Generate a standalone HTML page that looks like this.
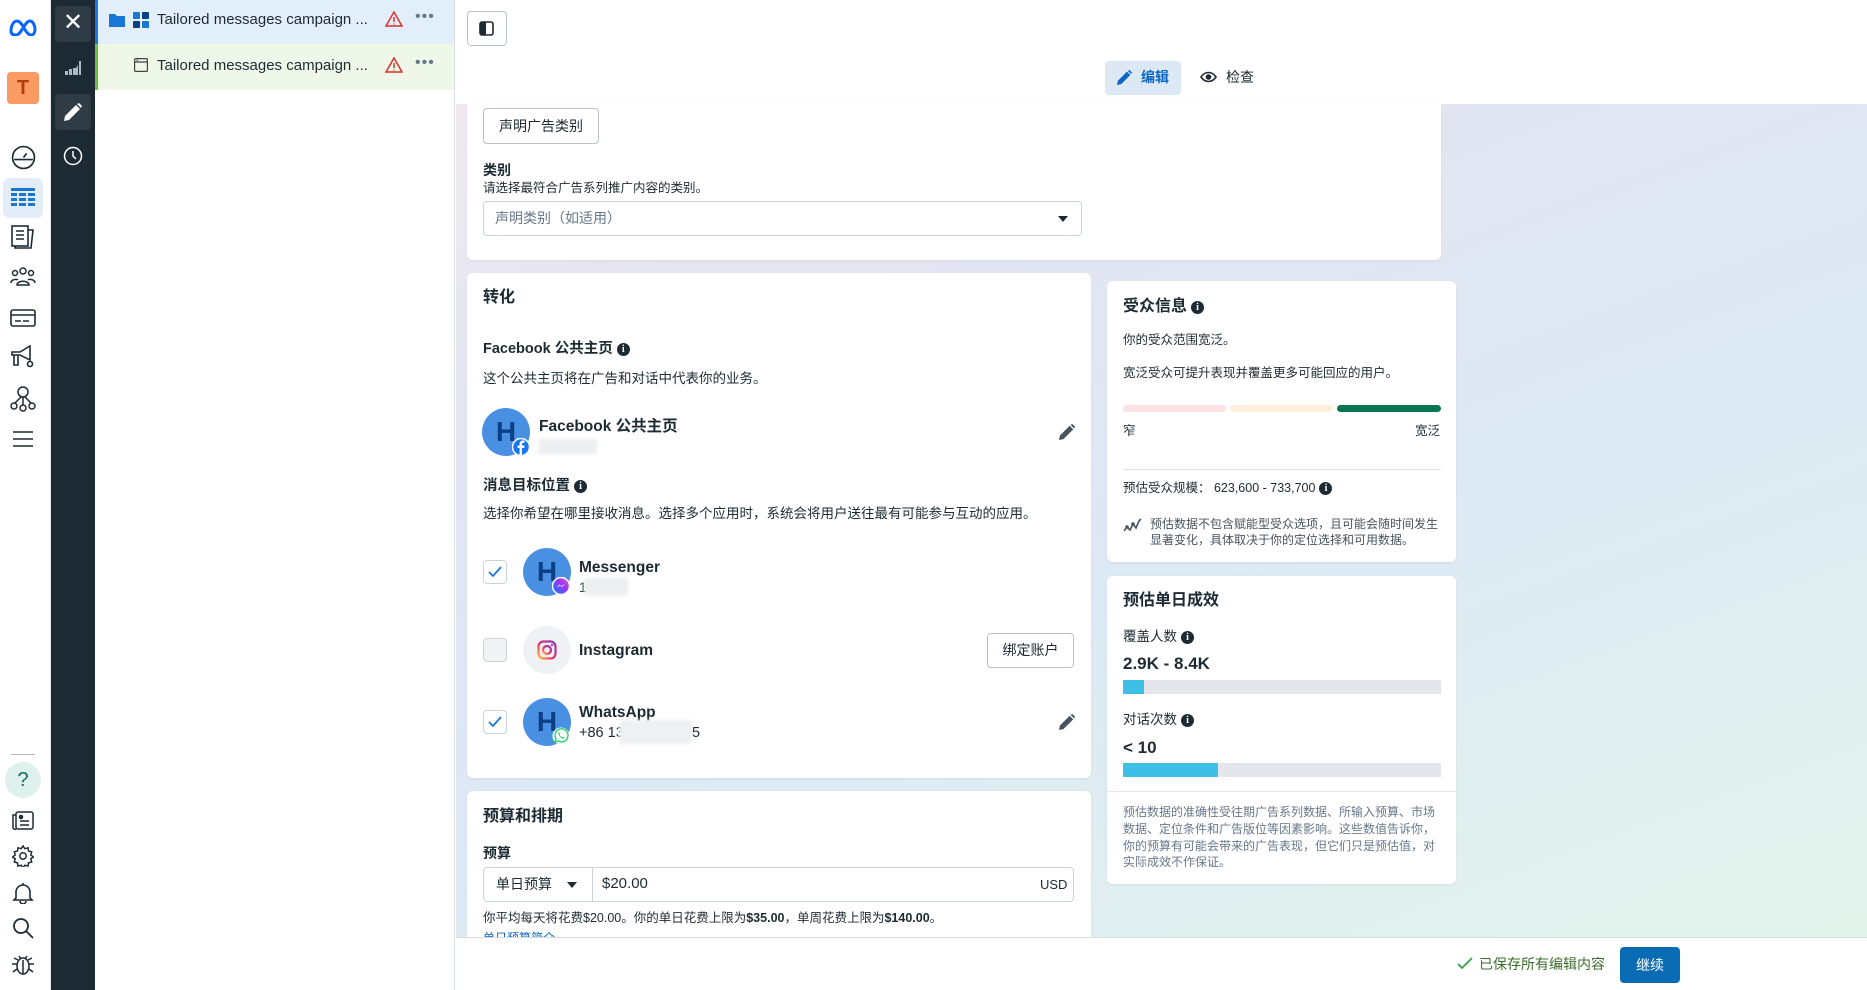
<!DOCTYPE html>
<html><head><meta charset="utf-8"><style>
*{box-sizing:border-box;margin:0;padding:0}
body{width:1867px;height:990px;overflow:hidden;position:relative;font-family:"Liberation Sans","Noto Sans CJK SC",sans-serif;color:#1c2b33;background:#fff}
.a{position:absolute}
.t{position:absolute;white-space:nowrap;line-height:1}
.card{position:absolute;background:#fff;border-radius:6px;box-shadow:0 1px 3px rgba(0,0,0,.06)}
.h{font-size:16px;font-weight:bold}
.s{font-size:13.5px;color:#1c2b33}
.info{display:inline-block;width:13px;height:13px;border-radius:50%;background:#1c2b33;color:#fff;font-size:10px;font-weight:bold;text-align:center;line-height:13px;vertical-align:1px;margin-left:4px;font-family:"Liberation Serif",serif}
.av{position:absolute;width:48px;height:48px;border-radius:50%;background:#4a90e2;color:#0a3f86;font-weight:bold;font-size:28px;text-align:center;line-height:48px}
.cb{position:absolute;width:24px;height:24px;border:1px solid #cbd2d9;border-radius:4px;background:#fff}
.ic{position:absolute}
</style></head><body>
<!-- left rail -->
<div class="a" style="left:0;top:0;width:51px;height:990px;background:#fff;border-right:1px solid #e6e9ec"></div>
<svg class="ic" style="left:8px;top:18px" width="30" height="18" viewBox="0 0 30 18"><path d="M3 13c0-6 3-10 6-10s6 5 7 7 4 7 7 7 4-3 4-6-2-8-5-8-5 4-7 7-4 7-7 7-5-1-5-4z" fill="none" stroke="#0866ff" stroke-width="3"/></svg>
<div class="a" style="left:7px;top:72px;width:32px;height:32px;background:#f99b62;border-radius:4px;color:#b53d0c;font-weight:bold;font-size:20px;text-align:center;line-height:32px">T</div>
<svg class="ic" style="left:11px;top:145px" width="25" height="25" viewBox="0 0 24 24" fill="none" stroke="#1c2b33" stroke-width="1.6"><circle cx="12" cy="12" r="10.5"/><path d="M3 14h18M12 12l3-4"/></svg>
<div class="a" style="left:3px;top:178px;width:40px;height:40px;background:#e3edf7;border-radius:6px"></div>
<svg class="ic" style="left:11px;top:188px" width="24" height="20" viewBox="0 0 24 20" fill="#1877d4"><rect x="0" y="0" width="24" height="3"/><rect x="0" y="5" width="6" height="3"/><rect x="8" y="5" width="7" height="3"/><rect x="17" y="5" width="7" height="3"/><rect x="0" y="10" width="6" height="3"/><rect x="8" y="10" width="7" height="3"/><rect x="17" y="10" width="7" height="3"/><rect x="0" y="15" width="6" height="3"/><rect x="8" y="15" width="7" height="3"/><rect x="17" y="15" width="7" height="3"/></svg>
<svg class="ic" style="left:11px;top:225px" width="24" height="24" viewBox="0 0 24 24" fill="none" stroke="#1c2b33" stroke-width="1.6"><rect x="1" y="1" width="16" height="20"/><path d="M17 5h5l-2 18H4v-2M5 6h8M5 10h8M5 14h8"/></svg>
<svg class="ic" style="left:10px;top:267px" width="26" height="20" viewBox="0 0 26 20" fill="none" stroke="#1c2b33" stroke-width="1.5"><circle cx="13" cy="4" r="3"/><circle cx="5" cy="6" r="2.5"/><circle cx="21" cy="6" r="2.5"/><path d="M7 18c0-5 12-5 12 0zM1 16c0-4 6-4 7-3M25 16c0-4-6-4-7-3"/></svg>
<svg class="ic" style="left:10px;top:309px" width="26" height="18" viewBox="0 0 26 18" fill="none" stroke="#1c2b33" stroke-width="1.6"><rect x="1" y="1" width="24" height="16" rx="2"/><path d="M1 6h24M5 12h6M13 12h6"/></svg>
<svg class="ic" style="left:10px;top:345px" width="26" height="24" viewBox="0 0 26 24" fill="none" stroke="#1c2b33" stroke-width="1.6"><path d="M2 7h8l10-6v14L10 10H2zM4 10v10h4V10"/><circle cx="20" cy="19" r="2.5"/></svg>
<svg class="ic" style="left:10px;top:386px" width="26" height="26" viewBox="0 0 26 26" fill="none" stroke="#1c2b33" stroke-width="1.5"><circle cx="13" cy="6" r="5"/><circle cx="4" cy="20" r="3"/><circle cx="13" cy="22" r="3"/><circle cx="22" cy="20" r="3"/><path d="M11 11l-6 6M13 11v8M15 11l6 6"/></svg>
<svg class="ic" style="left:13px;top:431px" width="20" height="16" viewBox="0 0 20 16" stroke="#1c2b33" stroke-width="1.6"><path d="M0 1h20M0 8h20M0 15h20"/></svg>
<div class="a" style="left:11px;top:754px;width:24px;height:1px;background:#aeb8c2"></div>
<div class="a" style="left:5px;top:762px;width:36px;height:36px;border-radius:50%;background:#dff1ec;color:#1a6b5c;font-size:20px;text-align:center;line-height:36px">?</div>
<svg class="ic" style="left:12px;top:811px" width="22" height="19" viewBox="0 0 22 19" fill="none" stroke="#1c2b33" stroke-width="1.5"><rect x="4" y="1" width="17" height="17" rx="2"/><path d="M4 4H1v12a2 2 0 0 0 3 2M8 10h9M8 14h9"/><circle cx="9" cy="6" r="1.5" fill="#1c2b33"/></svg>
<svg class="ic" style="left:12px;top:845px" width="22" height="22" viewBox="0 0 24 24" fill="none" stroke="#1c2b33" stroke-width="1.6"><circle cx="12" cy="12" r="3.5"/><path d="M12 1l2 3 3.5-1 .5 3.5 3.5 1-1 3.5 3 2-3 2 1 3.5-3.5 1-.5 3.5-3.5-1-2 3-2-3-3.5 1-.5-3.5-3.5-1 1-3.5-3-2 3-2-1-3.5 3.5-1 .5-3.5 3.5 1z"/></svg>
<svg class="ic" style="left:12px;top:882px" width="22" height="22" viewBox="0 0 22 22" fill="none" stroke="#1c2b33" stroke-width="1.6"><path d="M11 1v2M4 16V10a7 7 0 0 1 14 0v6l2 2H2zM8 19a3 3 0 0 0 6 0"/></svg>
<svg class="ic" style="left:12px;top:917px" width="22" height="22" viewBox="0 0 22 22" fill="none" stroke="#1c2b33" stroke-width="1.8"><circle cx="9" cy="9" r="7"/><path d="M14 14l7 7"/></svg>
<svg class="ic" style="left:11px;top:952px" width="24" height="24" viewBox="0 0 24 24" fill="none" stroke="#1c2b33" stroke-width="1.5"><ellipse cx="12" cy="14" rx="6" ry="8"/><path d="M8 4l2 3M16 4l-2 3M12 8v14M6 12H1M18 12h5M6 17l-4 3M18 17l4 3M7 8L3 6M17 8l4-2"/></svg>
<!-- dark bar -->
<div class="a" style="left:51px;top:0;width:44px;height:990px;background:#1c2b33"></div>
<div class="a" style="left:55px;top:6px;width:36px;height:36px;background:#2f3c46;border-radius:4px;color:#fff;font-size:24px;text-align:center;line-height:34px">✕</div>
<svg class="ic" style="left:65px;top:61px" width="16" height="14" viewBox="0 0 16 14" fill="#aeb8c2"><path d="M0 14V10h3v4zM4 14V8h3v6zM8 14V7h3l2-3v10zM14 14V0h2v14z"/></svg>
<div class="a" style="left:55px;top:94px;width:36px;height:36px;background:#2f3c46;border-radius:4px"></div>
<svg class="ic" style="left:64px;top:103px" width="18" height="18" viewBox="0 0 18 18" fill="#fff"><path d="M0 18l1-5L12 2l4 4L5 17zM13 1l2-1 3 3-1 2z"/></svg>
<svg class="ic" style="left:63px;top:146px" width="20" height="20" viewBox="0 0 20 20" fill="none" stroke="#fff" stroke-width="1.5"><circle cx="10" cy="10" r="8.5"/><path d="M10 5v5l3 3"/></svg>
<!-- tree panel -->
<div class="a" style="left:95px;top:0;width:360px;height:990px;background:#fff;border-right:1px solid #d8dde2"></div>
<div class="a" style="left:95px;top:0;width:359px;height:44px;background:#e3eefb;border-left:3px solid #1877f2"></div>
<div class="a" style="left:95px;top:44px;width:359px;height:46px;background:#eff8e8;border-left:3px solid #6bc33b"></div>
<svg class="ic" style="left:109px;top:13px" width="16" height="14" viewBox="0 0 16 14" fill="#1877d4"><path d="M0 1h6l2 2h8v11H0z"/></svg>
<svg class="ic" style="left:133px;top:12px" width="16" height="16" viewBox="0 0 16 16"><rect x="0" y="0" width="7" height="7" rx="1" fill="#1877d4"/><rect x="9" y="0" width="7" height="7" rx="1" fill="#0a3f86"/><rect x="0" y="9" width="7" height="7" rx="1" fill="#0a3f86"/><rect x="9" y="9" width="7" height="7" rx="1" fill="#1877d4"/></svg>
<div class="t" style="left:157px;top:12px;font-size:15px;color:#1c2b33">Tailored messages campaign ...</div>
<svg class="ic" style="left:385px;top:11px" width="18" height="16" viewBox="0 0 18 16" fill="none" stroke="#d6312a" stroke-width="1.5"><path d="M9 1L1 15h16zM9 6v5M9 12.5v1"/></svg>
<div class="t" style="left:415px;top:9px;font-size:16px;color:#67788a;letter-spacing:1px">•••</div>
<svg class="ic" style="left:134px;top:58px" width="14" height="14" viewBox="0 0 14 14" fill="none" stroke="#444" stroke-width="1.2"><rect x=".6" y=".6" width="12.8" height="12.8" rx="1"/><path d="M.6 4h12.8M2.5 2.3h1.5"/></svg>
<div class="t" style="left:157px;top:58px;font-size:15px;color:#1c2b33">Tailored messages campaign ...</div>
<svg class="ic" style="left:385px;top:57px" width="18" height="16" viewBox="0 0 18 16" fill="none" stroke="#d6312a" stroke-width="1.5"><path d="M9 1L1 15h16zM9 6v5M9 12.5v1"/></svg>
<div class="t" style="left:415px;top:55px;font-size:16px;color:#67788a;letter-spacing:1px">•••</div>
<!-- main bg -->
<div class="a" style="left:456px;top:0;width:1411px;height:990px;background:linear-gradient(160deg,#f3e9ef 0%,#e3e6f2 30%,#dde9f5 55%,#e1f1ee 85%,#e4f3ea 100%)"></div>
<div class="a" style="left:456px;top:0;width:1411px;height:104px;background:#fff"></div>
<div class="a" style="left:467px;top:11px;width:40px;height:35px;border:1px solid #bec3c9;border-radius:4px;background:#fff"></div>
<svg class="ic" style="left:479px;top:21px" width="15" height="15" viewBox="0 0 15 15"><rect x="1" y="1" width="13" height="13" rx="2" fill="none" stroke="#1c2b33" stroke-width="1.6"/><rect x="1" y="1" width="6" height="13" fill="#1c2b33"/></svg>
<div class="a" style="left:1105px;top:61px;width:76px;height:34px;background:#dce9f5;border-radius:4px"></div>
<svg class="ic" style="left:1117px;top:70px" width="15" height="15" viewBox="0 0 18 18" fill="#0a66c2"><path d="M0 18l1-5L12 2l4 4L5 17zM13 1l2-1 3 3-1 2z"/></svg>
<div class="t" style="left:1141px;top:70px;font-size:14px;font-weight:bold;color:#0a66c2">编辑</div>
<svg class="ic" style="left:1200px;top:71px" width="17" height="12" viewBox="0 0 17 12" fill="none" stroke="#1c2b33" stroke-width="1.6"><path d="M1 6c4-6 11-6 15 0-4 6-11 6-15 0z"/><circle cx="8.5" cy="6" r="2" fill="#1c2b33"/></svg>
<div class="t" style="left:1226px;top:70px;font-size:14px;color:#1c2b33">检查</div>
<!-- top card -->
<div class="card" style="left:467px;top:104px;width:974px;height:156px;border-radius:0 0 6px 6px"></div>
<div class="a" style="left:483px;top:108px;width:116px;height:36px;border:1px solid #bec3c9;border-radius:4px;background:#fff;font-size:14px;text-align:center;line-height:34px">声明广告类别</div>
<div class="t h" style="left:483px;top:163px;font-size:14px">类别</div>
<div class="t" style="left:483px;top:182px;font-size:12.5px">请选择最符合广告系列推广内容的类别。</div>
<div class="a" style="left:483px;top:201px;width:599px;height:35px;border:1px solid #cbd2d9;border-radius:4px;background:#fff"></div>
<div class="t" style="left:495px;top:211px;font-size:14px;color:#67788a">声明类别（如适用）</div>
<div class="a" style="left:1058px;top:216px;border-left:5px solid transparent;border-right:5px solid transparent;border-top:6px solid #1c2b33"></div>
<!-- conversion card -->
<div class="card" style="left:467px;top:273px;width:624px;height:505px"></div>
<div class="t h" style="left:483px;top:290px">转化</div>
<div class="t" style="left:483px;top:342px;font-size:14.5px;font-weight:bold">Facebook 公共主页<span class="info">i</span></div>
<div class="t s" style="left:483px;top:372px">这个公共主页将在广告和对话中代表你的业务。</div>
<div class="av" style="left:482px;top:408px">H</div>
<svg class="ic" style="left:512px;top:438px" width="18" height="18" viewBox="0 0 18 18"><circle cx="9" cy="9" r="8.5" fill="#1877f2" stroke="#fff" stroke-width="1.5"/><path d="M10 17V10h2.2l.3-2.5H10V6c0-.7.3-1.2 1.2-1.2h1.4V2.6c-.4 0-1-.1-1.8-.1-2 0-3.2 1.2-3.2 3.3v1.7H5.5V10h2.1v7z" fill="#fff"/></svg>
<div class="t" style="left:539px;top:419px;font-size:15.5px;font-weight:bold">Facebook 公共主页</div>
<div class="a" style="left:539px;top:439px;width:58px;height:15px;background:#eceef0;filter:blur(1.5px)"></div>
<svg class="ic" style="left:1059px;top:424px" width="16" height="16" viewBox="0 0 18 18" fill="#47545f"><path d="M0 18l1-5L12 2l4 4L5 17zM13 1l2-1 3 3-1 2z"/></svg>
<div class="t" style="left:483px;top:479px;font-size:14.5px;font-weight:bold">消息目标位置<span class="info">i</span></div>
<div class="t s" style="left:483px;top:507px">选择你希望在哪里接收消息。选择多个应用时，系统会将用户送往最有可能参与互动的应用。</div>
<div class="cb" style="left:483px;top:560px"></div>
<svg class="ic" style="left:487px;top:565px" width="16" height="14" viewBox="0 0 16 14" fill="none" stroke="#1877d4" stroke-width="1.8"><path d="M2 7l4 4 8-9"/></svg>
<div class="av" style="left:523px;top:548px">H</div>
<svg class="ic" style="left:552px;top:577px" width="18" height="18" viewBox="0 0 18 18"><defs><linearGradient id="mg" x1="0" y1="1" x2="1" y2="0"><stop offset="0" stop-color="#0a7cff"/><stop offset=".6" stop-color="#a033ff"/><stop offset="1" stop-color="#ff5c87"/></linearGradient></defs><circle cx="9" cy="9" r="8.5" fill="url(#mg)" stroke="#fff" stroke-width="1.5"/><path d="M4.5 11l3-3.5 2 1.6 3.5-2.6-3 3.6-2-1.6z" fill="#fff"/></svg>
<div class="t" style="left:579px;top:560px;font-size:15.5px;font-weight:bold">Messenger</div>
<div class="t" style="left:579px;top:580px;font-size:14px">1</div>
<div class="a" style="left:584px;top:578px;width:44px;height:18px;background:#eceef0;filter:blur(1.5px)"></div>
<div class="cb" style="left:483px;top:638px;background:#f1f3f5"></div>
<div class="a" style="left:523px;top:626px;width:48px;height:48px;border-radius:50%;background:#eff1f4"></div>
<svg class="ic" style="left:537px;top:640px" width="20" height="20" viewBox="0 0 20 20"><defs><linearGradient id="ig" x1="0" y1="1" x2="1" y2="0"><stop offset="0" stop-color="#fdb940"/><stop offset=".45" stop-color="#e6316c"/><stop offset="1" stop-color="#8a3ab9"/></linearGradient></defs><rect x="1.5" y="1.5" width="17" height="17" rx="5" fill="none" stroke="url(#ig)" stroke-width="2.2"/><circle cx="10" cy="10" r="4" fill="none" stroke="url(#ig)" stroke-width="2.2"/><circle cx="15" cy="5" r="1.2" fill="#b13a9c"/></svg>
<div class="t" style="left:579px;top:643px;font-size:15.5px;font-weight:bold">Instagram</div>
<div class="a" style="left:987px;top:633px;width:87px;height:35px;border:1px solid #bec3c9;border-radius:4px;background:#fff;font-size:14px;text-align:center;line-height:33px">绑定账户</div>
<div class="cb" style="left:483px;top:710px"></div>
<svg class="ic" style="left:487px;top:715px" width="16" height="14" viewBox="0 0 16 14" fill="none" stroke="#1877d4" stroke-width="1.8"><path d="M2 7l4 4 8-9"/></svg>
<div class="av" style="left:523px;top:698px">H</div>
<svg class="ic" style="left:552px;top:727px" width="18" height="18" viewBox="0 0 18 18"><circle cx="9" cy="9" r="8.5" fill="#fff"/><path d="M3 15l1-3.2A6.5 6.5 0 1 1 6.3 14z" fill="#fff" stroke="#25d366" stroke-width="1.4"/><path d="M6.5 6c.3-.8 1-.8 1.2 0l.4 1c.1.3-.4.7-.4.9.5 1 1.3 1.8 2.3 2.3.2 0 .6-.5.9-.4l1 .4c.8.3.6 1-.2 1.4-1.4.6-5.6-2.5-5.2-5.6z" fill="#25d366"/></svg>
<div class="t" style="left:579px;top:705px;font-size:15.5px;font-weight:bold">WhatsApp</div>
<div class="t" style="left:579px;top:726px;font-size:14.5px">+86 13</div>
<div class="a" style="left:619px;top:720px;width:73px;height:24px;background:#eef0f2;filter:blur(1.5px)"></div>
<div class="t" style="left:692px;top:726px;font-size:14.5px">5</div>
<svg class="ic" style="left:1059px;top:714px" width="16" height="16" viewBox="0 0 18 18" fill="#47545f"><path d="M0 18l1-5L12 2l4 4L5 17zM13 1l2-1 3 3-1 2z"/></svg>
<!-- budget card -->
<div class="card" style="left:467px;top:791px;width:624px;height:160px"></div>
<div class="t h" style="left:483px;top:809px">预算和排期</div>
<div class="t h" style="left:483px;top:846px;font-size:14px">预算</div>
<div class="a" style="left:483px;top:867px;width:591px;height:35px;border:1px solid #cbd2d9;border-radius:4px;background:#fff"></div>
<div class="a" style="left:592px;top:868px;width:1px;height:33px;background:#cbd2d9"></div>
<div class="t" style="left:496px;top:877px;font-size:14px">单日预算</div>
<div class="a" style="left:567px;top:882px;border-left:5px solid transparent;border-right:5px solid transparent;border-top:6px solid #1c2b33"></div>
<div class="t" style="left:602px;top:876px;font-size:15px">$20.00</div>
<div class="t" style="left:1040px;top:878px;font-size:13px">USD</div>
<div class="t" style="left:483px;top:912px;font-size:12.5px">你平均每天将花费$20.00。你的单日花费上限为<b>$35.00</b>，单周花费上限为<b>$140.00</b>。</div>
<div class="t" style="left:483px;top:932px;font-size:12px;color:#0a66c2">单日预算简介</div>
<!-- right cards -->
<div class="card" style="left:1107px;top:281px;width:349px;height:281px"></div>
<div class="t h" style="left:1123px;top:299px">受众信息<span class="info">i</span></div>
<div class="t" style="left:1123px;top:334px;font-size:12.5px">你的受众范围宽泛。</div>
<div class="t" style="left:1123px;top:367px;font-size:12.5px">宽泛受众可提升表现并覆盖更多可能回应的用户。</div>
<div class="a" style="left:1123px;top:405px;width:103px;height:7px;border-radius:4px;background:#fbe3e5"></div>
<div class="a" style="left:1230px;top:405px;width:103px;height:7px;border-radius:4px;background:#fdf1dc"></div>
<div class="a" style="left:1337px;top:405px;width:104px;height:7px;border-radius:4px;background:#077552"></div>
<div class="t" style="left:1123px;top:425px;font-size:12.5px">窄</div>
<div class="t" style="left:1415px;top:425px;font-size:12.5px">宽泛</div>
<div class="a" style="left:1123px;top:469px;width:318px;height:1px;background:#dadde1"></div>
<div class="t" style="left:1123px;top:482px;font-size:12.5px">预估受众规模：&nbsp;623,600 - 733,700<span class="info">i</span></div>
<svg class="ic" style="left:1123px;top:517px" width="19" height="16" viewBox="0 0 19 16" fill="none" stroke="#47545f" stroke-width="1.6"><path d="M1 14l3-4 3 3 3-6 3 4 3-7 2-2"/><circle cx="4" cy="10" r="1" fill="#47545f"/><circle cx="10" cy="7" r="1" fill="#47545f"/></svg>
<div class="t" style="left:1150px;top:516px;font-size:12px;color:#47545f;line-height:1.35;white-space:normal;width:290px">预估数据不包含赋能型受众选项，且可能会随时间发生显著变化，具体取决于你的定位选择和可用数据。</div>
<div class="card" style="left:1107px;top:576px;width:349px;height:308px"></div>
<div class="t h" style="left:1123px;top:593px">预估单日成效</div>
<div class="t" style="left:1123px;top:630px;font-size:13.5px">覆盖人数<span class="info">i</span></div>
<div class="t" style="left:1123px;top:655px;font-size:17px;font-weight:bold">2.9K - 8.4K</div>
<div class="a" style="left:1123px;top:680px;width:318px;height:14px;background:#e4e6eb"></div>
<div class="a" style="left:1123px;top:680px;width:21px;height:14px;background:#3ebfe6"></div>
<div class="t" style="left:1123px;top:713px;font-size:13.5px">对话次数<span class="info">i</span></div>
<div class="t" style="left:1123px;top:739px;font-size:17px;font-weight:bold">&lt; 10</div>
<div class="a" style="left:1123px;top:763px;width:318px;height:14px;background:#e4e6eb"></div>
<div class="a" style="left:1123px;top:763px;width:95px;height:14px;background:#3ebfe6"></div>
<div class="a" style="left:1107px;top:791px;width:349px;height:1px;background:#e4e6eb"></div>
<div class="t" style="left:1123px;top:804px;font-size:12px;color:#67788a;line-height:1.4;white-space:normal;width:320px">预估数据的准确性受往期广告系列数据、所输入预算、市场数据、定位条件和广告版位等因素影响。这些数值告诉你，你的预算有可能会带来的广告表现，但它们只是预估值，对实际成效不作保证。</div>
<!-- bottom bar -->
<div class="a" style="left:456px;top:937px;width:1411px;height:53px;background:#fff;border-top:1px solid #d8dde2"></div>
<svg class="ic" style="left:1457px;top:957px" width="16" height="13" viewBox="0 0 16 13" fill="none" stroke="#31a24c" stroke-width="1.8"><path d="M1 7l4 4 10-10"/></svg>
<div class="t" style="left:1479px;top:957px;font-size:14px;color:#3b6e2c">已保存所有编辑内容</div>
<div class="a" style="left:1620px;top:947px;width:60px;height:36px;background:#0a6cb5;border-radius:4px;color:#fff;font-size:14px;text-align:center;line-height:36px">继续</div>
</body></html>
